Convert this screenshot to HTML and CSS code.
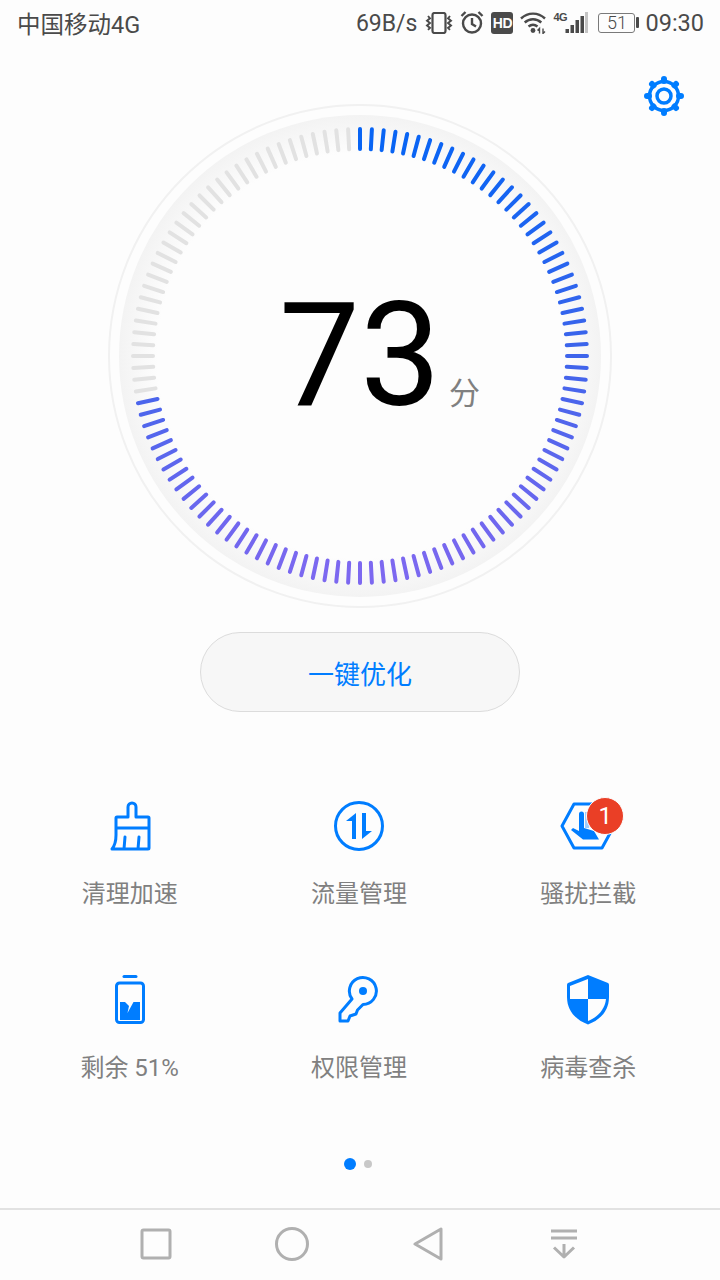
FILE: index.html
```html
<!DOCTYPE html>
<html lang="zh-CN">
<head>
  <meta charset="UTF-8" />
  <meta name="viewport" content="width=device-width, initial-scale=1.0"/>
  <title>手机管家</title>
  <link rel="stylesheet" href="styles.css">
</head>
<body>
  <div class="status-bar">
    <span class="carrier">中国移动4G</span>
    <div class="status-right">
      <span class="speed">69B/s</span>
      <svg class="ic-vibrate" width="28" height="22" viewBox="0 0 28 22" fill="none" stroke="#4a4a4a">
        <rect x="7.5" y="1" width="13" height="20" rx="2" stroke-width="2.200"/>
        <path d="M3 4l2 2.300-3 2.400 3 2.400-3 2.400 3 2.400-2 2M25 4l-2 2.300 3 2.400-3 2.400 3 2.400-3 2.400 2 2" stroke-width="1.900"/>
      </svg>
      <svg class="ic-alarm" width="24" height="24" viewBox="0 0 24 24" fill="none" stroke="#4a4a4a" stroke-width="2.400">
        <circle cx="12" cy="13.500" r="9"/>
        <path d="M12 8v6l4 2.500M1.500 6l4-4M22.500 6l-4-4"/>
      </svg>
      <span class="hd">HD</span>
      <svg class="ic-wifi" width="27" height="22" viewBox="0 0 27 22" fill="none" stroke="#4a4a4a" stroke-width="2.400">
        <path d="M1 6.500c7-6.500 17-6.500 24 0M4.700 10.500c4.800-4.300 11.800-4.300 16.600 0M8.500 14.500c2.700-2.200 6.300-2.200 9 0"/>
        <circle cx="13" cy="18.500" r="2.400" fill="#4a4a4a" stroke="none"/>
        <path d="M19.500 21.500v-5l-2 2M23 16.500v5l2-2" stroke-width="1.400"/>
      </svg>
      <span class="net-type">4G</span>
      <svg class="ic-signal" width="23" height="22" viewBox="0 0 23 22">
        <rect x="0.500" y="17" width="3.500" height="4" fill="#4a4a4a"/>
        <rect x="5.500" y="13" width="3.500" height="8" fill="#4a4a4a"/>
        <rect x="10.500" y="8" width="3.500" height="13" fill="#4a4a4a"/>
        <rect x="15.500" y="4" width="3.500" height="17" fill="#4a4a4a"/>
        <rect x="20" y="0" width="3" height="21" fill="#c4c4c4"/>
      </svg>
      <span class="battery">51</span>
      <span class="clock">09:30</span>
    </div>
  </div>

  <div class="hero">
    <svg class="ic-settings" width="40" height="40" viewBox="0 0 40 40" fill="none" stroke="#007dff">
      <circle cx="20" cy="20" r="14.500" stroke-width="3.500"/>
      <circle cx="20" cy="20" r="7" stroke-width="3.500"/>
      <path d="M20 3v2M20 35v2M3 20h2M35 20h2M8 8l1.500 1.500M30.500 30.500L32 32M8 32l1.500-1.500M30.500 9.500L32 8" stroke-width="6" stroke-linecap="round"/>
    </svg>

    <div class="gauge">
      <svg id="dial" width="504" height="504" viewBox="0 0 504 504">
        <defs>
          <radialGradient id="band" gradientUnits="userSpaceOnUse" cx="252" cy="252" r="241">
            <stop offset="0.84" stop-color="#fdfdfd"/>
            <stop offset="1" stop-color="#f3f3f3"/>
          </radialGradient>
        </defs>
        <circle cx="252" cy="252" r="251" fill="none" stroke="#f1f1f1" stroke-width="2"/>
        <circle cx="252" cy="252" r="241" fill="url(#band)"/>
      </svg>
      <div class="score">
        <span class="score-num">73<span class="score-unit">分</span></span>
      </div>
    </div>

    <button class="optimize">一键优化</button>
  </div>

  <div class="tools">
    <div class="tool">
      <svg class="tool-icon" viewBox="0 0 60 60" fill="none" stroke="#007dff" stroke-width="3" stroke-linejoin="round" stroke-linecap="round">
        <path d="M16 22a1 1 0 0 1 1-1H28V11a4 4 0 0 1 8 0V21H48a1 1 0 0 1 1 1V52a1 1 0 0 1-1 1H12q4-5 4-14ZM16 32H49M25 41l-1 12M39 41l-1 12"/>
      </svg>
      <span class="tool-name">清理加速</span>
    </div>
    <div class="tool">
      <svg class="tool-icon" viewBox="0 0 60 60" fill="none">
        <circle cx="30" cy="30" r="23.500" stroke="#007dff" stroke-width="3"/>
        <path d="M27 17V43H23V25L17 25ZM33 17H37V35H43L33 43Z" fill="#007dff"/>
      </svg>
      <span class="tool-name">流量管理</span>
    </div>
    <div class="tool">
      <div class="tool-icon-wrap">
        <svg class="tool-icon" viewBox="0 0 60 60" fill="none">
          <path d="M4 30L16 8H44L56 30L44 52H16Z" stroke="#007dff" stroke-width="3" stroke-linejoin="round"/>
          <path d="M27 16h4v16h-4Z" fill="#9fcdff"/>
          <path d="M21 18a2.500 2.500 0 0 1 5 0V32L36 35L41 43.500H25L13 34L15 32L21 35Z" fill="#007dff"/>
        </svg>
        <span class="badge">1</span>
      </div>
      <span class="tool-name">骚扰拦截</span>
    </div>
    <div class="tool">
      <svg class="tool-icon" viewBox="0 0 60 60" fill="none">
        <path d="M24 6.500H36" stroke="#007dff" stroke-width="3" stroke-linecap="round"/>
        <rect x="16.500" y="13" width="27" height="39.500" rx="3" stroke="#007dff" stroke-width="3"/>
        <path d="M20 32H25L29 36L27.500 43L33.500 32H40V50H20Z" fill="#007dff"/>
      </svg>
      <span class="tool-name">剩余 51%</span>
    </div>
    <div class="tool">
      <svg class="tool-icon" viewBox="0 0 60 60" fill="none">
        <path d="M34 34.500A13.500 13.500 0 1 0 23 29L11 43V51H19L21 46L27 44L28.500 40Z" stroke="#007dff" stroke-width="3" stroke-linejoin="round"/>
        <circle cx="34" cy="21" r="4" fill="#007dff"/>
      </svg>
      <span class="tool-name">权限管理</span>
    </div>
    <div class="tool">
      <svg class="tool-icon" viewBox="0 0 60 60">
        <path d="M30 5L50 13Q51 13.500 51 15V27C51 41 42 50 30 54.500C18 50 9 41 9 27V15Q9 13.500 10 13Z" fill="#007dff"/>
        <path d="M30 9L12 16V29H30Z" fill="#fdfdfd"/>
        <path d="M30 29H48C47 39 40 47 30 51Z" fill="#fdfdfd"/>
      </svg>
      <span class="tool-name">病毒查杀</span>
    </div>
  </div>

  <div class="pager">
    <span class="dot active"></span>
    <span class="dot"></span>
  </div>

  <div class="nav-bar">
    <div class="nav-item">
      <svg width="32" height="32" viewBox="0 0 32 32" fill="none" stroke="#b0b0b0" stroke-width="3" stroke-linejoin="round"><rect x="2" y="2" width="28" height="28" rx="1.500"/></svg>
    </div>
    <div class="nav-item">
      <svg width="34" height="34" viewBox="0 0 34 34" fill="none" stroke="#b0b0b0" stroke-width="3"><circle cx="17" cy="17" r="15.500"/></svg>
    </div>
    <div class="nav-item">
      <svg width="32" height="34" viewBox="0 0 32 34" fill="none" stroke="#b0b0b0" stroke-width="3" stroke-linejoin="round"><path d="M3 17L29 2V32Z"/></svg>
    </div>
    <div class="nav-item">
      <svg width="30" height="32" viewBox="0 0 30 32" fill="none" stroke="#b0b0b0" stroke-width="3" stroke-linecap="round" stroke-linejoin="round"><path d="M2 3H28M2 10H28M15 16V29M5 19.500L15 29L25 19.500" stroke-linecap="butt"/></svg>
    </div>
  </div>

  <script src="gauge.js"></script>
</body>
</html>
```

FILE: styles.css
```css
* {
  box-sizing: border-box;
}

body {
  margin: 0;
  width: 720px;
  height: 1280px;
  background: #fdfdfd;
  font-family: Roboto, 'Noto Sans CJK SC', sans-serif;
  display: flex;
  flex-direction: column;
  overflow: hidden;
}

.status-bar {
  height: 50px;
  flex: none;
  padding: 0 16px 4px 17px;
  display: flex;
  align-items: center;
  justify-content: space-between;
  color: #4a4a4a;
  font-size: 23.5px;
}

.status-right {
  display: flex;
  align-items: center;
}

.speed {
  margin-right: 8px;
  font-size: 23px;
}

.ic-alarm {
  margin-left: 7px;
  margin-top: -2px;
}

.hd {
  width: 22px;
  height: 22px;
  margin-left: 7px;
  background: #4a4a4a;
  border-radius: 3px;
  color: #fdfdfd;
  font: bold 14px/22px 'Liberation Sans', sans-serif;
  text-align: center;
  letter-spacing: -0.5px;
}

.ic-wifi {
  margin-left: 7px;
}

.net-type {
  width: 12px;
  margin-left: 6px;
  margin-top: -13px;
  font: bold 11px/10px 'Liberation Sans', sans-serif;
  letter-spacing: -0.6px;
}

.battery {
  position: relative;
  width: 37px;
  height: 20px;
  margin-left: 10px;
  margin-right: 10px;
  border: 1.5px solid #7a7a7a;
  border-radius: 3px;
  font-size: 18px;
  font-weight: 300;
  line-height: 17px;
  text-align: center;
}

.battery::after {
  content: "";
  position: absolute;
  right: -5px;
  top: 3px;
  width: 3px;
  height: 11px;
  background: #4a4a4a;
  border-radius: 1px;
}

.hero {
  position: relative;
  flex: none;
  padding-top: 54px;
  display: flex;
  flex-direction: column;
  align-items: center;
}

.ic-settings {
  position: absolute;
  top: 26px;
  right: 36px;
}

.gauge {
  position: relative;
  width: 504px;
  height: 504px;
}

#dial {
  display: block;
}

.score {
  position: absolute;
  inset: 0;
  display: flex;
  align-items: center;
  justify-content: center;
}

.score-num {
  position: relative;
  font-size: 144px;
  font-weight: 400;
  line-height: 1;
  color: #000;
}

.score-unit {
  position: absolute;
  left: 100%;
  bottom: 14px;
  margin-left: 8px;
  font-size: 31px;
  font-weight: 400;
  line-height: 40px;
  color: #808080;
}

.optimize {
  width: 320px;
  height: 80px;
  margin-top: 24px;
  background: #f7f7f7;
  border: 1px solid #dcdcdc;
  border-radius: 40px;
  color: #007dff;
  font-family: inherit;
  font-size: 26px;
}

.tools {
  flex: none;
  margin-top: 84px;
  padding: 0 17px 0 15px;
  display: grid;
  grid-template-columns: repeat(3, 1fr);
  row-gap: 59px;
}

.tool {
  display: flex;
  flex-direction: column;
  align-items: center;
}

.tool-icon {
  display: block;
  width: 60px;
  height: 60px;
}

.tool-icon-wrap {
  position: relative;
  width: 60px;
  height: 60px;
}

.tool-name {
  margin-top: 21px;
  font-size: 24px;
  line-height: 34px;
  color: #808080;
}

.badge {
  position: absolute;
  left: 28px;
  top: 1px;
  width: 38px;
  height: 38px;
  background: #ea3f26;
  border: 1px solid #fdfdfd;
  border-radius: 50%;
  color: #fff;
  font-size: 24px;
  line-height: 36px;
  text-align: center;
}

.pager {
  flex: none;
  margin-top: 73px;
  padding-right: 4px;
  display: flex;
  align-items: center;
  justify-content: center;
  gap: 8px;
}

.dot {
  width: 8px;
  height: 8px;
  border-radius: 50%;
  background: #c8c8c8;
}

.dot.active {
  width: 12px;
  height: 12px;
  background: #007dff;
}

.nav-bar {
  margin-top: auto;
  flex: none;
  height: 72px;
  padding-bottom: 2px;
  border-top: 2px solid #e2e2e2;
  display: flex;
  align-items: center;
  justify-content: center;
}

.nav-item {
  width: 136px;
  display: flex;
  justify-content: center;
}

.nav-item svg {
  display: block;
}
```

FILE: gauge.js
```js
// 120 ticks round the dial, clockwise from 12 o'clock
const SCORE_TICKS = 87;
const dial = document.getElementById("dial");

function tickColor(y) {
  const t = (y - 23) / 458;
  const top = [5, 100, 245];
  const mid = [62, 100, 235];
  const bottom = [128, 104, 240];
  const from = t < 0.5 ? top : mid;
  const to = t < 0.5 ? mid : bottom;
  const k = t < 0.5 ? t * 2 : (t - 0.5) * 2;
  const c = from.map((v, i) => Math.round(v + (to[i] - v) * k));
  return `rgb(${c[0]},${c[1]},${c[2]})`;
}

for (let i = 0; i < 120; i++) {
  const a = (i * 3 * Math.PI) / 180;
  const sin = Math.sin(a);
  const cos = Math.cos(a);
  const line = document.createElementNS("http://www.w3.org/2000/svg", "line");
  line.setAttribute("x1", 252 + 207 * sin);
  line.setAttribute("y1", 252 - 207 * cos);
  line.setAttribute("x2", 252 + 227 * sin);
  line.setAttribute("y2", 252 - 227 * cos);
  line.setAttribute("stroke-width", 4);
  line.setAttribute("stroke-linecap", "round");
  line.setAttribute("stroke", i < SCORE_TICKS ? tickColor(252 - 217 * cos) : "#e2e2e2");
  dial.appendChild(line);
}
```
